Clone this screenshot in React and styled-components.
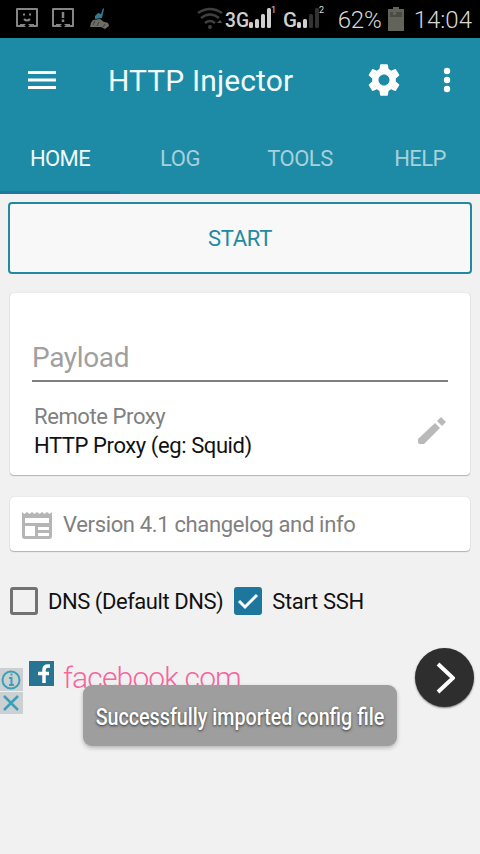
import React, { useState } from "react";
import styled, { createGlobalStyle } from "styled-components";

const GlobalStyle = createGlobalStyle`
  * {
    box-sizing: border-box;
  }
  body {
    margin: 0;
    background: #f1f1f1;
    font-family: Roboto, "Noto Sans", sans-serif;
  }
`;

const Screen = styled.div`
  position: relative;
  display: flex;
  flex-direction: column;
  width: 480px;
  height: 854px;
  background: #f1f1f1;
  overflow: hidden;
`;

const Text = styled.span`
  font-size: ${(p) => p.$size || 22}px;
  line-height: ${(p) => p.$line || 28}px;
  font-weight: ${(p) => p.$weight || 400};
  letter-spacing: ${(p) => p.$spacing || 0}px;
  color: ${(p) => p.$color || "#111"};
  white-space: nowrap;
`;

const StatusBar = styled.div`
  display: flex;
  align-items: center;
  justify-content: space-between;
  height: 38px;
  padding: 0 8px 0 16px;
  background: #000;
`;

const StatusGroup = styled.div`
  display: flex;
  align-items: center;
  gap: ${(p) => p.$gap || 0}px;
  height: 38px;
`;

const Percent = styled(Text)`
  width: 62px;
  padding: 2px 0 0 12px;
`;

const Clock = styled(Text)`
  padding-top: 2px;
`;

const AppBar = styled.header`
  display: grid;
  grid-template-columns: 108px 259px 34px 79px;
  align-items: center;
  height: 84px;
  background: #1d8ba5;
`;

const MenuButton = styled.div`
  padding-left: 28px;
  height: 20px;
  svg {
    display: block;
  }
`;

const MoreButton = styled.div`
  display: flex;
  padding-left: 42px;
`;

const Title = styled(Text)`
  padding-top: 1px;
`;

const Tabs = styled.nav`
  display: grid;
  grid-template-columns: repeat(4, 120px);
  height: 72px;
  background: #1d8ba5;
`;

const Tab = styled.div`
  display: flex;
  align-items: center;
  justify-content: center;
  padding-top: 5px;
  border-bottom: 3px solid ${(p) => (p.$active ? "#1d779d" : "transparent")};
  cursor: pointer;
`;

const Content = styled.main`
  display: flex;
  flex-direction: column;
  padding: 8px 8px 0;
`;

const StartButton = styled.button`
  height: 72px;
  padding: 2px 0 0;
  border: 2px solid #2389a3;
  border-radius: 4px;
  background: #f8f8f8;
  font-family: inherit;
`;

const Card = styled.section`
  margin: ${(p) => p.$top}px 2px 0;
  height: ${(p) => p.$height}px;
  border-radius: 4px;
  background: #fff;
  box-shadow: 0 1px 1px rgba(0, 0, 0, 0.24), 0 0 1px rgba(0, 0, 0, 0.25);
`;

const Field = styled.div`
  display: flex;
  align-items: flex-end;
  height: 89px;
  margin: 0 22px;
  padding-bottom: 5px;
  border-bottom: 2px solid #7f7f7f;
`;

const ProxyRow = styled.div`
  display: flex;
  justify-content: space-between;
  padding: 20px 23px 0 24px;
  svg {
    margin-top: 14px;
  }
`;

const ProxyText = styled.div`
  display: flex;
  flex-direction: column;
`;

const NewsRow = styled.div`
  display: flex;
  align-items: center;
  gap: 11px;
  height: 55px;
  padding-left: 12px;
`;

const Options = styled.div`
  display: flex;
  align-items: center;
  gap: 11px;
  height: 28px;
  margin: 36px 0 0 2px;
`;

const Option = styled.label`
  display: flex;
  align-items: center;
  gap: 10px;
`;

const OptionText = styled(Text)`
  padding-top: 2px;
`;

const Box = styled.span`
  display: flex;
  width: 28px;
  height: 28px;
  border-radius: 3px;
  border: ${(p) => (p.$checked ? "0" : "3px solid #727272")};
  background: ${(p) => (p.$checked ? "#1d779d" : "transparent")};
`;

const AdBanner = styled.div`
  display: flex;
  height: 76px;
  margin-top: 32px;
  padding-right: 6px;
`;

const AdChoices = styled.div`
  display: flex;
  flex-direction: column;
  gap: 1px;
  width: 23px;
  padding-top: 21px;
  svg {
    display: block;
    background: #cdd0d2;
  }
`;

const AdLogo = styled.div`
  width: 40px;
  padding: 14px 0 0 6px;
`;

const AdTitle = styled.div`
  flex: 1;
  padding-top: 17px;
`;

const GoButton = styled.div`
  display: flex;
  align-items: center;
  justify-content: center;
  width: 59px;
  height: 59px;
  margin-top: 1px;
  border-radius: 50%;
  background: #2e2e2e;
  box-shadow: 0 1px 2px rgba(0, 0, 0, 0.5);
`;

const Toast = styled.div`
  position: absolute;
  left: 83px;
  top: 685px;
  display: flex;
  align-items: center;
  justify-content: center;
  width: 314px;
  height: 61px;
  padding-top: 2px;
  border-radius: 9px;
  background: #9e9e9e;
  box-shadow: 0 2px 4px rgba(0, 0, 0, 0.25);
`;

const ToastText = styled(Text)`
  transform: scaleX(0.82);
  text-shadow: 0 1px 3px rgba(0, 0, 0, 0.7);
`;

const StatusIcons = () => (
  <svg width="94" height="24" viewBox="0 0 94 24" fill="none">
    <g stroke="#858585" strokeWidth="2">
      <path d="M1 2h20v17H1zM37 2h20v17H37z" strokeLinejoin="round" />
      <path d="M7 7.5h2M13 7.5h2M8 12q3 3 6 0" />
      <path d="M47 5v6M47 12.5v2.500" strokeWidth="2.5" />
    </g>
    <path d="M4 17h5l2 2 2-2h5v3H4zM40 17h5l2 2 2-2h5v3H40z" fill="#858585" />
    <path d="M8 18h6l-3 3zM44 18h6l-3 3z" fill="#000" />
    <path d="M74 20q0-4 3-7l7-1 4 3q5 0 5 4l-4 3-4-2z" fill="#6b6d66" />
    <path d="M79 9l3-3 3 1 2-6 1 1-2 9-7 1z" fill="#367890" />
    <path d="M77 18l2-4m2 5l2-4m4 5l2-3" stroke="#3f413c" />
  </svg>
);

const Wifi = () => (
  <svg width="28" height="24" viewBox="0 0 28 24" fill="none" stroke="#3f3f3f" strokeWidth="2.5">
    <path d="M1 6q12-8 24 0M4 11q9-7 18 0M8 16q5-4 10 0" />
    <circle cx="13" cy="20" r="2" fill="#3f3f3f" stroke="none" />
    <path d="M20 16h5l-2-3z" fill="#555" stroke="none" />
  </svg>
);

const barHeights = [6, 9, 14, 20];

const Signal = ({ name, nameWidth, lit, sim }) => (
  <svg width={nameWidth + 29} height="28" viewBox={`0 0 ${nameWidth + 29} 28`}>
    <text
      x="0"
      y="22"
      fontSize="21"
      fontWeight="500"
      fill="#cfcfcf"
      textLength={nameWidth}
      lengthAdjust="spacingAndGlyphs"
    >
      {name}
    </text>
    {barHeights.map((h, i) => (
      <rect key={h} x={nameWidth + i * 6} y={23 - h} width="4" height={h} rx="1.5" fill={i < lit ? "#cfcfcf" : "#333"} />
    ))}
    <text x={nameWidth + 22} y="8" fontSize="9" fill="#ddd">{sim}</text>
  </svg>
);

const Battery = () => (
  <svg width="16" height="24" viewBox="0 0 16 24">
    <path d="M5 0h6v2h5v22H0V2h5z" fill="#62635b" />
    <path d="M2 5h3v3h3V5h6v5H2z" fill="#4b4c45" />
  </svg>
);

const Gear = () => (
  <svg width="34" height="34" viewBox="1.2 1.2 21.6 21.6" fill="#fff">
    <path d="M19.43 12.98c.04-.32.07-.64.07-.98s-.03-.66-.07-.98l2.11-1.65c.19-.15.24-.42.12-.64l-2-3.46c-.12-.22-.39-.3-.61-.22l-2.49 1c-.52-.4-1.08-.73-1.69-.98l-.38-2.65C14.46 2.18 14.25 2 14 2h-4c-.25 0-.46.18-.49.42l-.38 2.65c-.61.25-1.17.59-1.69.98l-2.49-1c-.23-.09-.49 0-.61.22l-2 3.46c-.13.22-.07.49.12.64l2.11 1.65c-.04.32-.07.65-.07.98s.03.66.07.98l-2.11 1.65c-.19.15-.24.42-.12.64l2 3.46c.12.22.39.3.61.22l2.49-1c.52.4 1.08.73 1.69.98l.38 2.65c.03.24.24.42.49.42h4c.25 0 .46-.18.49-.42l.38-2.65c.61-.25 1.17-.59 1.69-.98l2.49 1c.23.09.49 0 .61-.22l2-3.46c.12-.22.07-.49-.12-.64l-2.11-1.65zM12 15.5c-1.93 0-3.5-1.57-3.5-3.5s1.57-3.5 3.5-3.5 3.5 1.57 3.5 3.5-1.57 3.5-3.5 3.5z" />
  </svg>
);

const Pencil = () => (
  <svg width="30" height="30" viewBox="0 0 30 30" fill="#b9b9b9">
    <path d="M1 23L18 7l5 5L7 28H3q-2 0-2-2z" />
    <path d="M20 5l4-4 5 5-4 4z" />
  </svg>
);

const News = () => (
  <svg width="30" height="28" viewBox="0 0 30 28">
    <path d="M0 1l2.5 2L5 1l2.5 2L10 1l2.5 2L15 1l2.5 2L20 1l2.5 2L25 1l2.5 2L30 1v24q0 3-3 3H3q-3 0-3-3z" fill="#b5b5b5" />
    <path d="M3 7h24v5H3zM3 15h10v10H3zM16 16h11v3H16zM16 22h11v3H16z" fill="#fff" />
  </svg>
);

const tabs = [
  { name: "HOME", spacing: -0.6 },
  { name: "LOG", spacing: -0.5 },
  { name: "TOOLS", spacing: -0.5 },
  { name: "HELP", spacing: -0.6 },
];

const App = () => {
  const [activeTab, setActiveTab] = useState("HOME");

  return (
    <>
      <GlobalStyle />
      <Screen>
        <StatusBar>
          <StatusGroup>
            <StatusIcons />
          </StatusGroup>
          <StatusGroup>
            <Wifi />
            <StatusGroup $gap={5}>
              <Signal name="3G" nameWidth={24} lit={4} sim="1" />
              <Signal name="G" nameWidth={14} lit={2} sim="2" />
            </StatusGroup>
            <Percent $size={24} $weight={300} $color="#d8d8d8" $spacing={-0.2}>62%</Percent>
            <StatusGroup $gap={10}>
              <Battery />
              <Clock $size={24} $weight={300} $color="#d8d8d8">14:04</Clock>
            </StatusGroup>
          </StatusGroup>
        </StatusBar>

        <AppBar>
          <MenuButton>
            <svg width="28" height="20" fill="#fff">
              <path d="M0 1h28v3H0zM0 8.5h28v3H0zM0 16h28v3H0z" />
            </svg>
          </MenuButton>
          <Title $size={30} $line={36} $color="#f2fafb" $spacing={0.12}>HTTP Injector</Title>
          <Gear />
          <MoreButton>
            <svg width="8" height="26" fill="#fff">
              <circle cx="4" cy="4" r="3.2" />
              <circle cx="4" cy="13" r="3.2" />
              <circle cx="4" cy="22" r="3.2" />
            </svg>
          </MoreButton>
        </AppBar>

        <Tabs>
          {tabs.map((tab) => (
            <Tab key={tab.name} $active={tab.name === activeTab} onClick={() => setActiveTab(tab.name)}>
              <Text $spacing={tab.spacing} $color={tab.name === activeTab ? "#f2fafb" : "#a6d0da"}>
                {tab.name}
              </Text>
            </Tab>
          ))}
        </Tabs>

        <Content>
          <StartButton>
            <Text $color="#2389a3" $spacing={-0.3}>START</Text>
          </StartButton>

          <Card $top={19} $height={182}>
            <Field>
              <Text $size={28} $line={34} $color="#a0a0a0" $spacing={-0.35}>Payload</Text>
            </Field>
            <ProxyRow>
              <ProxyText>
                <Text $line={29} $color="#808080" $spacing={-0.4}>Remote Proxy</Text>
                <Text $line={29} $spacing={-0.41}>HTTP Proxy (eg: Squid)</Text>
              </ProxyText>
              <Pencil />
            </ProxyRow>
          </Card>

          <Card $top={22} $height={54}>
            <NewsRow>
              <News />
              <Text $color="#808080" $spacing={-0.34}>Version 4.1 changelog and info</Text>
            </NewsRow>
          </Card>

          <Options>
            <Option>
              <Box />
              <OptionText $spacing={-0.45}>DNS (Default DNS)</OptionText>
            </Option>
            <Option>
              <Box $checked>
                <svg width="28" height="28" fill="none" stroke="#fff" strokeWidth="3">
                  <path d="M5 14l6 6L23 8" />
                </svg>
              </Box>
              <OptionText $spacing={-0.35}>Start SSH</OptionText>
            </Option>
          </Options>
        </Content>

        <AdBanner>
          <AdChoices>
            <svg width="23" height="23" fill="none" stroke="#3aa0b8" strokeWidth="2">
              <circle cx="11" cy="12" r="8.5" />
              <path d="M9 10h2.5v7M9 17h5M10.5 6.5h2" />
            </svg>
            <svg width="23" height="22" fill="none" stroke="#3aa0b8" strokeWidth="2.5">
              <path d="M4 4l14 14M18 4L4 18" />
            </svg>
          </AdChoices>
          <AdLogo>
            <svg width="25" height="25">
              <path d="M0 0h25v25H0z" fill="#287593" />
              <path d="M21 5h-2q-4 0-4 4v13M9 12.5h11" fill="none" stroke="#fff" strokeWidth="3.5" />
            </svg>
          </AdLogo>
          <AdTitle>
            <Text $size={30} $weight={300} $color="#f3679c" $spacing={-0.85}>facebook.com</Text>
          </AdTitle>
          <GoButton>
            <svg width="20" height="34" fill="none" stroke="#fff" strokeWidth="4">
              <path d="M3 3l15 14L3 31" />
            </svg>
          </GoButton>
        </AdBanner>

        <Toast>
          <ToastText $size={24} $weight={500} $color="#fff">Successfully imported config file</ToastText>
        </Toast>
      </Screen>
    </>
  );
};

export default App;
